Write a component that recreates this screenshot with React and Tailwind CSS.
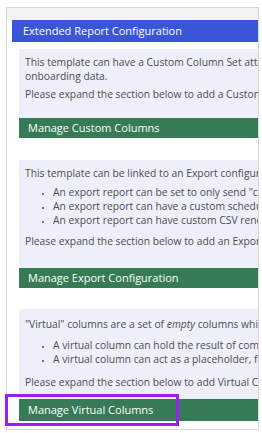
export default function App() {
  const body = "text-[10.3px] leading-[14px] text-[#4d4d4d] whitespace-nowrap";
  const green = "h-[20px] flex items-center pl-[9px] bg-[#377a56] text-white text-[11px] whitespace-nowrap";

  return (
    <div className="relative w-[262px] h-[433px] bg-white font-['Open_Sans',sans-serif]">
      <div className="absolute left-[6px] top-[7px] w-[253px] h-[423px] border border-[#d6d6d6] overflow-hidden">
        <div className="h-[12px] bg-[#f3f3f3]" />
        <div className="w-[420px] pl-[5px]">
          {/* Extended report header */}
          <div className="h-[22px] flex items-center pl-[11px] bg-[#3b55d9] text-white text-[11px] whitespace-nowrap">
            Extended Report Configuration
          </div>

          <div className="pl-[7px] pt-[7px]">
            {/* Custom columns */}
            <div className={`bg-[#efeffc] pt-[6px] pb-[17px] pl-[6px] ${body}`}>
              <p>This template can have a Custom Column Set attached to add more columns to the</p>
              <p>onboarding data.</p>
              <p className="mt-[4px]">Please expand the section below to add a Custom Column Set.</p>
            </div>
            <div className={green}>Manage Custom Columns</div>

            {/* Export configuration */}
            <div className={`mt-[22px] bg-[#efeffc] pt-[6px] pb-[20px] pl-[6px] ${body}`}>
              <p>This template can be linked to an Export configuration.</p>
              <ul className="list-disc pl-[28px] mt-[5px] mb-[7px] marker:text-[7px]">
                <li>An export report can be set to only send "changed" records.</li>
                <li>An export report can have a custom schedule.</li>
                <li>An export report can have custom CSV rendering.</li>
              </ul>
              <p>Please expand the section below to add an Export Configuration.</p>
            </div>
            <div className={green}>Manage Export Configuration</div>

            {/* Virtual columns */}
            <div className={`mt-[21px] bg-[#efeffc] pt-[8px] pb-[10px] pl-[6px] ${body}`}>
              <p>
                "Virtual" columns are a set of <em>empty</em> columns which can be filled later.
              </p>
              <ul className="list-disc pl-[28px] mt-[7px] mb-[9px] marker:text-[7px]">
                <li>A virtual column can hold the result of combining other columns.</li>
                <li>A virtual column can act as a placeholder, for data added later.</li>
              </ul>
              <p>Please expand the section below to add Virtual Columns.</p>
            </div>
            <div className={`${green} h-[22px]`}>Manage Virtual Columns</div>
          </div>
        </div>
      </div>

      {/* highlight annotation */}
      <div className="absolute left-[5px] top-[394px] w-[174px] h-[32px] border-[3px] border-[#9a1ff0]" />
    </div>
  );
}
